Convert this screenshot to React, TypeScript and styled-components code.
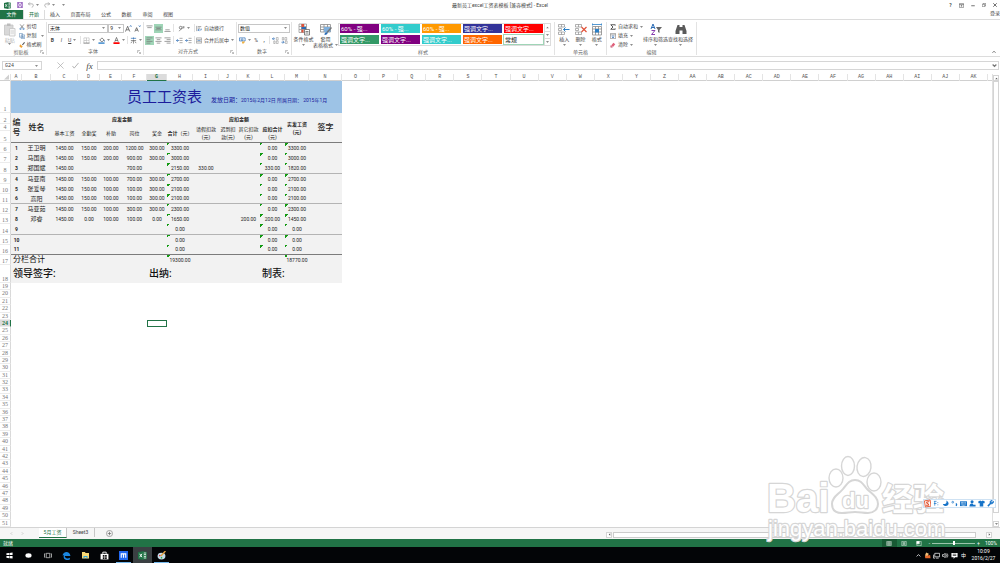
import React from 'react';
import styled, { createGlobalStyle, css } from 'styled-components';

const green = '#217346';
const uiFont = `Roboto, 'Noto Sans CJK SC', sans-serif`;
const columnWidths = [11, 11, 29, 27, 22, 22, 25, 20, 26, 26, 18, 23, 25, 24, 33];
const columnNames = [
  ...'ABCDEFGHIJKLMNOPQRSTUVWXYZ'.split(''),
  ...'ABCDEFGHIJK'.split('').map((c) => 'A' + c),
];
const gridColumns = columnWidths.map((w) => `${w}px`).join(' ') + ' repeat(23, 1fr) 4px';

const GlobalStyle = createGlobalStyle`
  * { box-sizing: border-box; }
  body { margin: 0; background: #fff; font: 5px/1 ${uiFont}; color: #444; }
  button, select, input { font: inherit; color: inherit; margin: 0; padding: 0; border: 0; background: none; border-radius: 0; }
  svg { display: block; flex: none; }
`;

const Page = styled.div`
  position: relative;
  display: flex;
  flex-direction: column;
  min-height: 100vh;
  overflow: hidden;
`;

/* ---------- title bar and tabs ---------- */
const TitleBar = styled.header`
  display: grid;
  grid-template-columns: 1fr auto 1fr;
  align-items: center;
  height: 10px;
`;
const QuickAccess = styled.div`
  display: flex;
  align-items: center;
  gap: 5px;
  padding-left: 4px;
`;
const WindowControls = styled.div`
  display: flex;
  justify-content: flex-end;
  gap: 4px;
  padding-right: 2px;
`;
const IconButton = styled.button`
  display: flex;
  align-items: center;
  gap: 2px;
  min-width: 7px;
  justify-content: center;
`;
const TabBar = styled.nav`
  display: flex;
  align-items: stretch;
  height: 9px;
`;
const FileTab = styled.button`
  width: 23px;
  background: ${green};
  color: #fff;
`;
const RibbonTab = styled.button<{ $w: number; $active?: boolean }>`
  width: ${(p) => p.$w}px;
  ${(p) =>
    p.$active &&
    css`
      color: ${green};
      background: #fff;
      border: 1px solid #dcdcdc;
      border-width: 0 1px;
    `}
`;
const SignIn = styled.a`
  margin-left: auto;
  padding-top: 1px;
  color: #444;
  text-decoration: none;
`;

/* ---------- ribbon ---------- */
const Ribbon = styled.section`
  display: flex;
  height: 38px;
  padding: 2px 0 1px;
  border: 1px solid #dcdcdc;
  border-width: 1px 0;
`;
const GroupBox = styled.div<{ $w: number }>`
  display: flex;
  flex-direction: column;
  width: ${(p) => p.$w}px;
  border-right: 1px solid #e3e3e3;
`;
const GroupBody = styled.div<{ $row?: boolean; $pad?: number }>`
  flex: 1;
  display: flex;
  flex-direction: ${(p) => (p.$row ? 'row' : 'column')};
  gap: ${(p) => (p.$row ? 0 : 2)}px;
  padding: 1px ${(p) => p.$pad ?? 1}px 0;
`;
const GroupLabel = styled.div`
  display: flex;
  align-items: center;
  height: 7px;
  padding: 0 2px;
  color: #666;
  span { flex: 1; text-align: center; }
`;
const ToolRow = styled.div`
  display: flex;
  align-items: center;
  height: 10px;
`;
const Tool = styled.button<{ $w?: number; $on?: boolean }>`
  display: flex;
  align-items: center;
  justify-content: center;
  gap: 2px;
  width: ${(p) => p.$w ?? 9}px;
  height: 9px;
  background: ${(p) => (p.$on ? '#9fd5b7' : 'transparent')};
`;
const TextTool = styled.button`
  display: flex;
  align-items: center;
  gap: 2px;
  height: 7px;
  white-space: nowrap;
`;
const Rule = styled.i`
  width: 1px;
  height: 8px;
  margin: 0 1px;
  background: #e3e3e3;
`;
const BigTool = styled.button<{ $w: number; $dim?: boolean }>`
  display: flex;
  flex-direction: column;
  align-items: center;
  width: ${(p) => p.$w}px;
  height: 26px;
  color: ${(p) => (p.$dim ? '#b5b5b5' : '#444')};
  line-height: 6px;
  white-space: nowrap;
`;
const InlineCaret = styled.span`
  display: flex;
  align-items: center;
  justify-content: center;
  gap: 2px;
  min-height: 6px;
`;
const Combo = styled.label<{ $w: number }>`
  display: flex;
  align-items: center;
  width: ${(p) => p.$w}px;
  height: 9px;
  padding: 0 2px 0 1px;
  border: 1px solid #c6c6c6;
  color: #222;
  select { flex: 1; min-width: 0; height: 7px; appearance: none; }
`;
const SmallStack = styled.div<{ $ml?: number }>`
  display: flex;
  flex-direction: column;
  gap: 2px;
  margin-left: ${(p) => p.$ml ?? 0}px;
`;
const Gallery = styled.div`
  display: flex;
  flex: 1;
  height: 23px;
  margin: 0 2px 0 1px;
  border: 1px solid #dcdcdc;
`;
const Swatches = styled.div`
  flex: 1;
  display: grid;
  grid-template-columns: repeat(5, 39px);
  grid-auto-rows: 9px;
  gap: 2px;
  padding: 0 1px;
`;
const Swatch = styled.button<{ $bg: string; $plain?: boolean }>`
  background: ${(p) => p.$bg};
  color: ${(p) => (p.$plain ? '#222' : '#fff')};
  font-size: 6px;
  line-height: 8px;
  text-align: left;
  padding-left: 1px;
  white-space: nowrap;
  outline: ${(p) => (p.$plain ? '1px solid #9fd5b7' : 'none')};
`;
const GalleryScroll = styled.div`
  display: grid;
  width: 6px;
  border-left: 1px solid #dcdcdc;
  button { display: grid; place-items: center; border-bottom: 1px solid #dcdcdc; }
  button:last-child { border: 0; }
`;
const CollapseRibbon = styled.button`
  align-self: flex-end;
  margin: 0 4px 1px auto;
`;

/* ---------- formula bar ---------- */
const FormulaBar = styled.div`
  display: flex;
  align-items: center;
  height: 17px;
  padding: 0 1px 0 2px;
`;
const NameBox = styled.label`
  display: flex;
  align-items: center;
  width: 40px;
  height: 9px;
  padding: 0 3px 0 2px;
  border: 1px solid #d6d6d6;
  input { flex: 1; min-width: 0; font: 5px 'Liberation Mono', monospace; outline: 0; }
`;
const FormulaButtons = styled.div`
  display: flex;
  align-items: center;
  justify-content: space-between;
  width: 36px;
  margin: 0 4px 0 15px;
`;
const FormulaField = styled.label`
  display: flex;
  align-items: center;
  flex: 1;
  height: 9px;
  padding-right: 1px;
  border: 1px solid #d6d6d6;
  input { flex: 1; outline: 0; }
`;
const FxText = styled.i`
  font: italic 9px 'Liberation Serif', serif;
`;

/* ---------- sheet ---------- */
const SheetArea = styled.main`
  flex: 1;
  display: flex;
  border-bottom: 1px solid #d4d4d4;
`;
const Sheet = styled.div`
  flex: 1;
  display: flex;
  flex-direction: column;
  min-width: 0;
`;
const ColumnHeads = styled.div`
  display: grid;
  grid-template-columns: ${gridColumns};
  height: 7px;
  border-bottom: 1px solid #d0d0d0;
`;
const ColumnHead = styled.div<{ $on?: boolean }>`
  height: 7px;
  border-right: 1px solid #e4e4e4;
  font: 5px/7px 'Liberation Mono', monospace;
  text-align: center;
  color: ${(p) => (p.$on ? green : '#555')};
  ${(p) => p.$on && css`background: #dcdcdc; font-weight: bold; border-bottom: 1px solid ${green};`}
`;
const rowHead = css`
  border-right: 1px solid #d9d9d9;
  border-bottom: 1px solid #ececec;
  background: #fff;
  font: 6px/6px 'Liberation Serif', serif;
  text-align: center;
  color: #777;
`;
const SalaryTable = styled.table`
  width: 342px;
  table-layout: fixed;
  border-collapse: separate;
  border-spacing: 0;
  background: #f2f2f2;
  color: #222;
  td, th { padding: 0; text-align: center; font-weight: normal; white-space: nowrap; }
`;
const Row = styled.tr<{ $h: number; $line?: string }>`
  height: ${(p) => p.$h}px;
  & > td { border-bottom: ${(p) => (p.$line ? `1px solid ${p.$line}` : '0')}; }
`;
const RowNumber = styled.th`
  && { ${rowHead} vertical-align: bottom; }
`;
const TitleCell = styled.td`
  background: #9dc3e6;
  color: #1c1c9c;
`;
const TitleLine = styled.div`
  display: flex;
  align-items: baseline;
  padding-left: 116px;
  strong { font-size: 15px; font-weight: normal; line-height: 18px; margin-right: 9px; }
  span { font-size: 6px; }
`;
const HeadCell = styled.td<{ $big?: boolean; $bold?: boolean; $line?: boolean }>`
  && {
    font-size: ${(p) => (p.$big ? 8 : 5)}px;
    line-height: ${(p) => (p.$big ? 10 : 8)}px;
    font-weight: ${(p) => (p.$bold ? 'bold' : p.$big ? 500 : 'normal')};
    border-bottom: ${(p) => (p.$line ? '1px solid #7c7c7c' : '0')};
    white-space: pre-line;
  }
`;
const Cell = styled.td<{ $flag?: boolean; $size?: number; $bold?: boolean }>`
  && {
    font-size: ${(p) => p.$size ?? 5}px;
    font-weight: ${(p) => (p.$bold ? 'bold' : 'normal')};
  }
  ${(p) =>
    p.$flag &&
    css`background: linear-gradient(135deg, #139a13 50%, transparent 50%) 0 0 / 3px 3px no-repeat;`}
`;
const SumCell = styled.td<{ $size: number; $weight?: number }>`
  && {
    font-size: ${(p) => p.$size}px;
    text-align: left;
    padding-left: 2px;
    color: #111;
    font-weight: ${(p) => p.$weight ?? 400};
    line-height: 1;
  }
`;
const EmptyRows = styled.div`
  flex: 1;
  display: flex;
  flex-direction: column;
`;
const EmptyRow = styled.div`
  flex: 1;
  min-height: 7px;
  display: grid;
  grid-template-columns: ${gridColumns};
`;
const EmptyHead = styled.div<{ $on?: boolean }>`
  ${rowHead}
  ${(p) => p.$on && css`background: #dcdcdc; color: ${green}; font-weight: bold; border-right-color: ${green};`}
`;
const SelectedCell = styled.div`
  grid-column: 8;
  border: 1px solid ${green};
`;
const VScroll = styled.div`
  display: flex;
  flex-direction: column;
  width: 8px;
  padding: 1px 1px 0 0;
  border-left: 1px solid #e0e0e0;
`;
const ScrollButton = styled.button`
  display: grid;
  place-items: center;
  width: 6px;
  height: 6px;
  border: 1px solid #d4d4d4;
  background: #fff;
`;
const VThumb = styled.div`
  flex: 1;
  width: 6px;
  margin-bottom: 8px;
  border: 1px solid #d4d4d4;
`;

/* ---------- sheet tabs, status bar, task bar ---------- */
const SheetTabs = styled.div`
  display: flex;
  align-items: stretch;
  height: 11px;
  background: #f6f6f6;
`;
const TabArrows = styled.div`
  display: flex;
  align-items: center;
  justify-content: space-around;
  width: 39px;
  padding: 0 11px 0 6px;
`;
const SheetTab = styled.button<{ $on?: boolean }>`
  width: 28px;
  height: ${(p) => (p.$on ? 10 : 9)}px;
  color: ${(p) => (p.$on ? green : '#444')};
  background: ${(p) => (p.$on ? '#fff' : 'transparent')};
  border-right: 1px solid #c6c6c6;
  border-bottom: ${(p) => (p.$on ? `1px solid ${green}` : '0')};
`;
const NewSheet = styled(IconButton)`
  margin-left: 11px;
`;
const HScroll = styled.div`
  display: flex;
  align-items: center;
  gap: 1px;
  width: 394px;
  margin-left: auto;
  padding: 2px 8px 0 0;
`;
const HThumb = styled.div`
  width: 363px;
  height: 6px;
  margin-right: auto;
  background: #fff;
  border: 1px solid #cccccc;
`;
const StatusBar = styled.footer`
  display: flex;
  align-items: center;
  height: 8px;
  padding: 0 3px;
  background: ${green};
  color: #fff;
`;
const ViewButtons = styled.div`
  display: flex;
  margin-left: auto;
`;
const ViewButton = styled.button<{ $on?: boolean }>`
  display: grid;
  place-items: center;
  width: 15px;
  height: 8px;
  background: ${(p) => (p.$on ? '#185a34' : 'transparent')};
`;
const Zoom = styled.label`
  display: flex;
  align-items: center;
  gap: 2px;
  margin: 0 5px 0 2px;
  input {
    width: 43px;
    height: 5px;
    appearance: none;
    background: linear-gradient(#9cc4ac, #9cc4ac) center / 100% 1px no-repeat;
  }
  input::-webkit-slider-thumb { appearance: none; width: 2px; height: 4px; background: #fff; }
`;
const TaskBar = styled.footer`
  display: flex;
  align-items: stretch;
  height: 16px;
  background: #030507;
  color: #fff;
`;
const TaskItem = styled.button<{ $on?: boolean; $open?: boolean }>`
  display: grid;
  place-items: center;
  width: 15px;
  margin: 0 2px;
  background: ${(p) => (p.$on ? '#3a3f42' : 'transparent')};
  box-shadow: ${(p) => (p.$on ? '-2px 0 #3a3f42, 2px 0 #3a3f42' : 'none')};
  border-bottom: 1px solid ${(p) => (p.$open ? '#76b9ed' : p.$on ? '#3a3f42' : 'transparent')};
  border-top: 1px solid transparent;
`;
const Tray = styled.div`
  display: flex;
  align-items: center;
  gap: 2px;
  margin-left: auto;
  padding-right: 4px;
`;
const Clock = styled.time`
  width: 25px;
  margin-left: 2px;
  line-height: 7px;
  text-align: center;
`;

/* ---------- overlays ---------- */
const Watermark = styled.svg`
  position: absolute;
  right: 50px;
  bottom: 19px;
  pointer-events: none;
`;
const ImeBar = styled.div`
  position: absolute;
  right: 4px;
  bottom: 55px;
  display: flex;
  align-items: center;
  gap: 2px;
  height: 9px;
  padding-right: 1px;
  background: #fff;
  border: 1px solid #cfe2f3;
  color: #1673c8;
`;

type IconProps = { w?: number; h?: number; box?: string; children: React.ReactNode };
const Icon = ({ w = 7, h = 7, box = '0 0 16 16', children }: IconProps) => (
  <svg width={w} height={h} viewBox={box} fill="none" stroke="currentColor" strokeWidth="1.6" aria-hidden="true">
    {children}
  </svg>
);
const Caret = () => (
  <svg width="3" height="2" viewBox="0 0 6 4" aria-hidden="true"><path d="M0 0h6L3 4z" fill="#8c8c8c" /></svg>
);
const Launcher = () => (
  <svg width="4" height="4" viewBox="0 0 8 8" fill="none" stroke="#888" aria-hidden="true">
    <path d="M1 6V1h5M3 3l4 4M7 4v3H4" />
  </svg>
);
const Lines = ({ rows, color = '#777' }: { rows: [number, number, number][]; color?: string }) => (
  <Icon>{rows.map(([x, y, w]) => <path key={y} d={`M${x} ${y}h${w}`} stroke={color} strokeWidth="1.6" />)}</Icon>
);
const ExcelIcon = ({ size = 7 }: { size?: number }) => (
  <Icon w={size} h={size}>
    <path d="M9 2h6v12H9z" fill="#fff" stroke={green} />
    <path d="M10 5h4M10 8h4M10 11h4" stroke={green} />
    <path d="M0 2l10-2v16L0 14z" fill={green} stroke="none" />
    <path d="M3 5l4 6M7 5l-4 6" stroke="#fff" />
  </Icon>
);
const TableGlyph = () => (
  <g stroke="#888" strokeWidth="1.3" fill="#fff">
    <path d="M1 2h12v5H1zM7 2v5M1 17h12v5H1zM7 17v5M1 10h6v4H1z" />
  </g>
);

const Group = ({ label, w, launcher, children }: { label: string; w: number; launcher?: boolean; children: React.ReactNode }) => (
  <GroupBox $w={w}>
    {children}
    <GroupLabel><span>{label}</span>{launcher && <Launcher />}</GroupLabel>
  </GroupBox>
);

const swatches: [string, string][] = [
  ['60% - 强...', '#800080'], ['60% - 强...', '#33cccc'], ['60% - 强...', '#ff9900'],
  ['强调文字...', '#333399'], ['强调文字...', '#ff0000'], ['强调文字...', '#339966'],
  ['强调文字...', '#800080'], ['强调文字...', '#33cccc'], ['强调文字...', '#ff6600'], ['常规', '#ffffff'],
];

const people: string[][] = [
  ['王卫明', '1450.00', '150.00', '200.00', '1200.00', '300.00', '3300.00', '', '', '', '0.00', '3300.00'],
  ['马国鑫', '1450.00', '150.00', '200.00', '900.00', '300.00', '3000.00', '', '', '', '0.00', '3000.00'],
  ['郑国斌', '1450.00', '', '', '700.00', '', '2150.00', '330.00', '', '', '330.00', '1820.00'],
  ['马亚南', '1450.00', '150.00', '100.00', '700.00', '300.00', '2700.00', '', '', '', '0.00', '2700.00'],
  ['张爱琴', '1450.00', '150.00', '100.00', '100.00', '300.00', '2100.00', '', '', '', '0.00', '2100.00'],
  ['高阳', '1450.00', '150.00', '100.00', '100.00', '300.00', '2100.00', '', '', '', '0.00', '2100.00'],
  ['马亚茹', '1450.00', '150.00', '100.00', '300.00', '300.00', '2300.00', '', '', '', '0.00', '2300.00'],
  ['邓睿', '1450.00', '0.00', '100.00', '100.00', '0.00', '1650.00', '', '', '200.00', '200.00', '1450.00'],
  ['', '', '', '', '', '', '0.00', '', '', '', '0.00', '0.00'],
  ['', '', '', '', '', '', '0.00', '', '', '', '0.00', '0.00'],
  ['', '', '', '', '', '', '0.00', '', '', '', '0.00', '0.00'],
];
const flagged = [6, 10, 11];
const rowLine = (i: number) => (i === 10 ? '#7c7c7c' : i === 2 || i === 5 || i === 8 ? '#b4b4b4' : undefined);

const RibbonBar = () => (
  <Ribbon>
    <Group label="剪贴板" w={47} launcher>
      <GroupBody $row $pad={2}>
        <BigTool $w={16} $dim>
          <Icon w={12} h={14} box="0 0 24 28">
            <path d="M1 4h17v20H1z" fill="#d8d8d8" stroke="#c4c4c4" /><path d="M6 1h7v5H6z" fill="#bbb" stroke="none" />
            <path d="M11 11h11v15H11z" fill="#f6f6f6" stroke="#c4c4c4" /><path d="M13 16h7M13 20h7" stroke="#ccc" />
          </Icon>
          <span>粘贴</span><Caret />
        </BigTool>
        <SmallStack $ml={1}>
          <TextTool>
            <Icon w={6} h={6}><path d="M3 1l8 10M13 1L5 11" stroke="#555" /><circle cx="4" cy="13" r="2" stroke="#2b6cb5" /><circle cx="12" cy="13" r="2" stroke="#2b6cb5" /></Icon>剪切
          </TextTool>
          <TextTool>
            <Icon w={6} h={6}><path d="M1 1h8v10H1zM6 5h9v10H6z" fill="#fff" stroke="#5b87b5" /><path d="M8 9h5M8 12h5" stroke="#5b87b5" /></Icon>复制 &nbsp;<Caret />
          </TextTool>
          <TextTool>
            <Icon w={6} h={6}><path d="M15 1L9 8" stroke="#555" strokeWidth="3" /><path d="M3 6l7 6-4 4-5-5z" fill="#f0a030" stroke="none" /></Icon>格式刷
          </TextTool>
        </SmallStack>
      </GroupBody>
    </Group>

    <Group label="字体" w={97} launcher>
      <GroupBody>
        <ToolRow>
          <Combo $w={61}><select aria-label="字体"><option>宋体</option></select><Caret /></Combo>
          <Combo $w={16}><select aria-label="字号"><option>9</option></select><Caret /></Combo>
          <Tool aria-label="增大字号"><Icon><path d="M1 15L6 3l5 12M3 11h6" /><path d="M11 4l2-3 2 3" stroke="#2b6cb5" /></Icon></Tool>
          <Tool aria-label="减小字号"><Icon><path d="M2 15L6 6l4 9M4 12h4" /><path d="M11 1l2 3 2-3" stroke="#2b6cb5" /></Icon></Tool>
        </ToolRow>
        <ToolRow>
          <Tool><b>B</b></Tool>
          <Tool><i>I</i></Tool>
          <Tool $w={13}><u>U</u><Caret /></Tool>
          <Rule />
          <Tool $w={15} aria-label="边框"><Icon><path d="M2 2h12v12H2zM8 2v12M2 8h12" stroke="#aaa" strokeDasharray="2 1" /><path d="M1 14h14" stroke="#777" /></Icon><Caret /></Tool>
          <Tool $w={15} aria-label="填充颜色"><Icon><path d="M4 7l5-5 5 5-5 4z" stroke="#555" /><path d="M14 7l2 4" stroke="#2b6cb5" /><path d="M1 14h14" stroke="#5b9bd5" strokeWidth="4" /></Icon><Caret /></Tool>
          <Tool $w={15} aria-label="字体颜色"><Icon><path d="M4 11L8 1l4 10M5 8h6" stroke="#555" /><path d="M1 14h14" stroke="#f00" strokeWidth="4" /></Icon><Caret /></Tool>
          <Rule />
          <Tool $w={13} aria-label="拼音"><Icon><path d="M2 3h12M8 1v4" stroke="#2b6cb5" /><path d="M2 8h12M8 6v9M5 10l-3 4M11 10l3 4" stroke="#666" /></Icon><Caret /></Tool>
        </ToolRow>
      </GroupBody>
    </Group>

    <Group label="对齐方式" w={93} launcher>
      <GroupBody>
        <ToolRow>
          <Tool aria-label="顶端对齐"><Lines rows={[[1, 2, 14], [3, 6, 10]]} /></Tool>
          <Tool $on aria-label="垂直居中"><Lines rows={[[1, 5, 14], [3, 8, 10], [1, 11, 14]]} /></Tool>
          <Tool aria-label="底端对齐"><Lines rows={[[3, 11, 10], [1, 15, 14]]} /></Tool>
          <Rule />
          <Tool $w={18} aria-label="方向"><Icon><path d="M2 14L14 4M14 4l-4 0M14 4l-1 4" stroke="#777" /><circle cx="6" cy="6" r="3" stroke="#555" /></Icon><Caret /></Tool>
          <Rule />
          <TextTool><Icon w={6}><path d="M2 1v14M5 3h9M5 7h6" stroke="#666" /><path d="M5 12h9V8M8 10l-3 2 3 3" stroke="#2b6cb5" /></Icon>自动换行</TextTool>
        </ToolRow>
        <ToolRow>
          <Tool $on aria-label="左对齐"><Lines rows={[[1, 2, 14], [1, 6, 9], [1, 10, 14], [1, 14, 9]]} /></Tool>
          <Tool aria-label="居中"><Lines rows={[[1, 2, 14], [4, 6, 8], [1, 10, 14], [4, 14, 8]]} /></Tool>
          <Tool aria-label="右对齐"><Lines rows={[[1, 2, 14], [6, 6, 9], [1, 10, 14], [6, 14, 9]]} /></Tool>
          <Rule />
          <Tool aria-label="减少缩进"><Icon><path d="M8 3h7M8 8h7M8 13h7" stroke="#888" /><path d="M7 8H1M4 5L1 8l3 3" stroke="#2b6cb5" /></Icon></Tool>
          <Tool aria-label="增加缩进"><Icon><path d="M8 3h7M8 8h7M8 13h7" stroke="#888" /><path d="M0 8h6M3 5l3 3-3 3" stroke="#2b6cb5" /></Icon></Tool>
          <Rule />
          <TextTool><Icon w={6}><path d="M1 1h14v14H1zM1 5h14M1 11h14" stroke="#888" /><path d="M4 8h8" stroke="#2b6cb5" /></Icon>合并后居中<Caret /></TextTool>
        </ToolRow>
      </GroupBody>
    </Group>

    <Group label="数字" w={55} launcher>
      <GroupBody>
        <ToolRow><Combo $w={52}><select aria-label="数字格式"><option>数值</option></select><Caret /></Combo></ToolRow>
        <ToolRow>
          <Tool $w={14} aria-label="会计数字格式"><Icon><path d="M1 2h13v7H1z" stroke="#2b6cb5" /><circle cx="7" cy="6" r="2" stroke="#2b6cb5" /><path d="M7 10h7l-3 5H7z" fill="#f0b040" stroke="none" /></Icon><Caret /></Tool>
          <Tool $w={8}>%</Tool>
          <Tool $w={8}><b>,</b></Tool>
          <Rule />
          <Tool aria-label="增加小数位数"><Icon><path d="M1 4h6M4 1L1 4l3 3" stroke="#2b6cb5" /><path d="M10 1h4v6h-4zM4 9h3v6H4zM10 9h4v6h-4z" stroke="#777" strokeWidth="1" /></Icon></Tool>
          <Tool aria-label="减少小数位数"><Icon><path d="M9 1h4v6H9zM3 1h3v6H3zM10 9h4v6h-4z" stroke="#777" strokeWidth="1" /><path d="M1 12h6M4 9l3 3-3 3" stroke="#2b6cb5" /></Icon></Tool>
        </ToolRow>
      </GroupBody>
    </Group>

    <Group label="样式" w={263}>
      <GroupBody $row>
        <BigTool $w={21}>
          <Icon w={12} h={13} box="0 0 24 24">
            <path d="M2 1h15v17H2zM7 1v17M12 1v17M2 6h15M2 12h15" stroke="#999" /><path d="M7 1h5v6H7zM7 12h4v6H7z" fill="#e0523a" stroke="none" />
            <path d="M7 7h9v4H7z" fill="#2b6cb5" stroke="none" /><path d="M13 12h10v11H13zM15 16h6M15 19h6" fill="#fff" stroke="#666" />
          </Icon>
          <span>条件格式</span><InlineCaret><Caret /></InlineCaret>
        </BigTool>
        <BigTool $w={23}>
          <Icon w={12} h={13} box="0 0 24 24">
            <path d="M1 2h20v15H1zM1 7h20M1 12h20M8 2v15M15 2v15" stroke="#888" /><path d="M8 7h13v10H8z" fill="#7fb0dd" stroke="none" />
            <path d="M23 8l-9 10" stroke="#777" strokeWidth="3" /><path d="M9 23c0-5 3-6 6-5 1 3-2 5-6 5z" fill="#2b6cb5" stroke="none" />
          </Icon>
          <span>套用</span><InlineCaret>表格格式<Caret /></InlineCaret>
        </BigTool>
        <Gallery>
          <Swatches>
            {swatches.map(([t, c], i) => <Swatch key={i} $bg={c} $plain={i === 9}>{t}</Swatch>)}
          </Swatches>
          <GalleryScroll>
            <button aria-label="上一行"><Icon w={3} h={3}><path d="M1 12l7-8 7 8z" fill="#777" stroke="none" /></Icon></button>
            <button aria-label="下一行"><Caret /></button>
            <button aria-label="其他样式"><Caret /></button>
          </GalleryScroll>
        </Gallery>
      </GroupBody>
    </Group>

    <Group label="单元格" w={52}>
      <GroupBody $row>
        <BigTool $w={17}>
          <Icon w={12} h={13} box="0 0 24 24"><TableGlyph /><path d="M23 12H11M15 8l-4 4 4 4" stroke="#2b7fc5" strokeWidth="2" /></Icon>
          <span>插入</span><InlineCaret><Caret /></InlineCaret>
        </BigTool>
        <BigTool $w={16}>
          <Icon w={12} h={13} box="0 0 24 24"><TableGlyph /><path d="M13 7l10 10M23 7L13 17" stroke="#e0523a" strokeWidth="2.4" /></Icon>
          <span>删除</span><InlineCaret><Caret /></InlineCaret>
        </BigTool>
        <BigTool $w={17}>
          <Icon w={12} h={13} box="0 0 24 24"><path d="M3 6h18v17H3zM3 11h18M3 17h18M9 6v17M15 6v17" stroke="#888" /><path d="M8 11h8v7H8z" fill="#2b7fc5" stroke="none" /><path d="M3 2h18M3 0v4M21 0v4" stroke="#2b7fc5" /></Icon>
          <span>格式</span><InlineCaret><Caret /></InlineCaret>
        </BigTool>
      </GroupBody>
    </Group>

    <Group label="编辑" w={90}>
      <GroupBody $row $pad={3}>
        <SmallStack>
          <TextTool><Icon w={6} h={6}><path d="M14 4V2H2l6 6-6 6h12v-2" stroke="#444" strokeWidth="2.4" /></Icon>自动求和 <Caret /></TextTool>
          <TextTool><Icon w={6} h={6}><path d="M1 1h14v14H1zM1 5h14" stroke="#777" /><path d="M8 6v7M5 10l3 3 3-3" stroke="#2b6cb5" strokeWidth="2" /></Icon>填充<Caret /></TextTool>
          <TextTool><Icon w={6} h={6}><path d="M9 2l5 4-6 7-5-4z" fill="#e0607a" stroke="none" /><path d="M2 10l4 4H2z" stroke="#c04060" /></Icon>清除<Caret /></TextTool>
        </SmallStack>
        <BigTool $w={25}>
          <Icon w={12} h={13} box="0 0 24 24"><path d="M2 11L6 1l4 10M3 8h6" stroke="#2b6cb5" strokeWidth="2" /><path d="M3 14h7l-7 8h7" stroke="#8a3fb0" strokeWidth="2" /><path d="M12 7h12l-5 6v6l-3-2v-4z" fill="#666" stroke="none" /></Icon>
          <span>排序和筛选</span><InlineCaret><Caret /></InlineCaret>
        </BigTool>
        <BigTool $w={26}>
          <Icon w={12} h={13} box="0 0 24 24"><path d="M5 3h4v4h6V3h4l4 12v6h-8v-7h-6v7H1v-6z" fill="#5a5a5a" stroke="none" /></Icon>
          <span>查找和选择</span><InlineCaret><Caret /></InlineCaret>
        </BigTool>
      </GroupBody>
    </Group>
    <CollapseRibbon aria-label="折叠功能区"><Icon w={4} h={4}><path d="M2 11l6-6 6 6" strokeWidth="3" /></Icon></CollapseRibbon>
  </Ribbon>
);

const Salary = () => (
  <SalaryTable>
    <colgroup>{columnWidths.map((w, i) => <col key={i} style={{ width: w }} />)}</colgroup>
    <tbody>
      <Row $h={32}>
        <RowNumber>1</RowNumber>
        <TitleCell colSpan={14}>
          <TitleLine><strong>员工工资表</strong><span>发放日期：</span>2015年2月12日 所属日期： 2015年1月</TitleLine>
        </TitleCell>
      </Row>
      <Row $h={11}>
        <RowNumber>2</RowNumber>
        <HeadCell rowSpan={3} $big $line>{'编\n号'}</HeadCell>
        <HeadCell rowSpan={3} $big $line>姓名</HeadCell>
        <HeadCell colSpan={6} $bold>应发金额</HeadCell>
        <HeadCell colSpan={4} $bold>应扣金额</HeadCell>
        <HeadCell rowSpan={3} $bold $line>{'实发工资\n(元)'}</HeadCell>
        <HeadCell rowSpan={3} $big $line>签字</HeadCell>
      </Row>
      <Row $h={7}>
        <RowNumber>4</RowNumber>
        {['基本工资', '全勤奖', '补助', '岗位', '奖金'].map((t) => <HeadCell key={t} rowSpan={2} $line>{t}</HeadCell>)}
        <HeadCell rowSpan={2} $line><b>合计</b>（元）</HeadCell>
        <HeadCell rowSpan={2} $line>{'请假扣款\n(元)'}</HeadCell>
        <HeadCell rowSpan={2} $line>{'迟到扣\n款(元)'}</HeadCell>
        <HeadCell rowSpan={2} $line>{'其它扣款\n(元)'}</HeadCell>
        <HeadCell rowSpan={2} $line><b>应扣合计</b>{'\n(元)'}</HeadCell>
      </Row>
      <Row $h={12}><RowNumber>5</RowNumber></Row>
      {people.map((p, i) => (
        <Row key={i} $h={i === 2 || i === 8 ? 11 : 10} $line={rowLine(i)}>
          <RowNumber>{i + 6}</RowNumber>
          <Cell $bold>{i + 1}</Cell>
          {p.map((v, c) => <Cell key={c} $size={c === 0 ? 6 : 5} $flag={flagged.includes(c)}>{v}</Cell>)}
          <Cell />
        </Row>
      ))}
      <Row $h={10}>
        <RowNumber>17</RowNumber>
        <SumCell $size={8} colSpan={7}>分栏合计</SumCell>
        <Cell $flag>19300.00</Cell>
        <Cell colSpan={4} />
        <Cell $flag>18770.00</Cell>
        <Cell />
      </Row>
      <Row $h={18}>
        <RowNumber>18</RowNumber>
        <SumCell $size={10} $weight={500} colSpan={6}>领导签字:</SumCell>
        <SumCell $size={10} $weight={500} colSpan={5}>出纳:</SumCell>
        <SumCell $size={10} $weight={500} colSpan={3}>制表:</SumCell>
      </Row>
    </tbody>
  </SalaryTable>
);

const Paw = () => (
  <Watermark width="184" height="92" viewBox="766 452 184 92" fill="#fff" stroke="#d6d6d6" strokeWidth="1.4" strokeLinejoin="round" aria-hidden="true">
    <g fontFamily="'Liberation Sans', sans-serif" fontWeight="bold">
      <text x="767" y="512" fontSize="40" strokeWidth="2.4" paintOrder="stroke">Bai</text>
      <ellipse cx="836" cy="478" rx="7" ry="9" />
      <ellipse cx="848" cy="466" rx="6.5" ry="9.5" />
      <ellipse cx="864" cy="467" rx="7" ry="9.5" transform="rotate(8 864 467)" />
      <ellipse cx="874" cy="482" rx="7" ry="9" />
      <path d="M855 480c-6 0-8 4-12 9-5 6-11 8-11 15 0 6 4 9 10 9 5 0 8-1 13-1s8 1 13 1c6 0 10-4 10-9 0-7-6-10-11-15-4-5-6-9-12-9z" strokeWidth="2" />
      <text x="842" y="508" fontSize="22" strokeWidth="2.4" paintOrder="stroke">du</text>
    </g>
    <text x="882" y="510" fontSize="31" fontFamily="'Noto Sans CJK SC', sans-serif" fontWeight="bold" strokeWidth="2.4" paintOrder="stroke">经验</text>
    <text x="768" y="536" fontSize="22" fontFamily="'Liberation Sans', sans-serif" strokeWidth="2.4" paintOrder="stroke">jingyan.baidu.com</text>
  </Watermark>
);

export default function App() {
  return (
    <Page>
      <GlobalStyle />
      <TitleBar>
        <QuickAccess>
          <ExcelIcon />
          <IconButton aria-label="保存"><Icon w={6} h={6}><path d="M1 1h14v14H1zM4 1v5h8V1M4 15V10h8v5" stroke="#8a4fb5" strokeWidth="2" /></Icon></IconButton>
          <IconButton aria-label="撤消"><Icon w={6} h={6}><path d="M5 1L1 5l4 4M1 5h9c6 0 5 8 0 9" stroke="#999" strokeWidth="2" /></Icon><Caret /></IconButton>
          <IconButton aria-label="恢复"><Icon w={6} h={6}><path d="M11 1l4 4-4 4M15 5H6c-6 0-5 8 0 9" stroke="#999" strokeWidth="2" /></Icon><Caret /></IconButton>
          <IconButton aria-label="自定义快速访问工具栏"><Caret /></IconButton>
        </QuickAccess>
        <span>最新员工excel工资表模板 [兼容模式] - Excel</span>
        <WindowControls>
          <IconButton><b>?</b></IconButton>
          <IconButton aria-label="功能区显示选项"><Icon w={5} h={5}><path d="M1 2h14v12H1zM1 5h14M8 12V7M6 9l2-2 2 2" /></Icon></IconButton>
          <IconButton aria-label="最小化"><Icon w={4} h={4}><path d="M1 11h14" strokeWidth="3" /></Icon></IconButton>
          <IconButton aria-label="还原"><Icon w={4} h={4}><path d="M1 5h10v10H1zM5 5V1h10v10h-4" strokeWidth="2" /></Icon></IconButton>
          <IconButton aria-label="关闭"><Icon w={4} h={4}><path d="M1 1l14 14M15 1L1 15" strokeWidth="3" /></Icon></IconButton>
        </WindowControls>
      </TitleBar>
      <TabBar>
        <FileTab>文件</FileTab>
        <RibbonTab $w={22} $active>开始</RibbonTab>
        <RibbonTab $w={20}>插入</RibbonTab>
        <RibbonTab $w={31}>页面布局</RibbonTab>
        <RibbonTab $w={20}>公式</RibbonTab>
        <RibbonTab $w={21}>数据</RibbonTab>
        <RibbonTab $w={21}>审阅</RibbonTab>
        <RibbonTab $w={20}>视图</RibbonTab>
        <SignIn href="#signin">登录</SignIn>
      </TabBar>
      <RibbonBar />

      <FormulaBar>
        <NameBox><input aria-label="名称框" defaultValue="G24" /><Caret /></NameBox>
        <FormulaButtons>
          <IconButton aria-label="取消"><Icon><path d="M1 1l14 14M15 1L1 15" stroke="#aaa" /></Icon></IconButton>
          <IconButton aria-label="输入"><Icon><path d="M1 9l4 5L15 2" stroke="#aaa" strokeWidth="2" /></Icon></IconButton>
          <IconButton aria-label="插入函数"><FxText>fx</FxText></IconButton>
        </FormulaButtons>
        <FormulaField>
          <input aria-label="编辑栏" />
          <Icon w={5} h={5}><path d="M2 5l6 6 6-6" strokeWidth="4" stroke="#777" /></Icon>
        </FormulaField>
      </FormulaBar>

      <SheetArea>
        <Sheet>
          <ColumnHeads>
            <ColumnHead><Icon w={10} h={6} box="0 0 20 12"><path d="M18 1v10H8z" fill="#d0d0d0" stroke="none" /></Icon></ColumnHead>
            {columnNames.map((n) => <ColumnHead key={n} $on={n === 'G'}>{n}</ColumnHead>)}
          </ColumnHeads>
          <Salary />
          <EmptyRows>
            {Array.from({ length: 33 }, (_, i) => i + 19).map((n) => (
              <EmptyRow key={n}>
                <EmptyHead $on={n === 24}>{n}</EmptyHead>
                {n === 24 && <SelectedCell />}
              </EmptyRow>
            ))}
          </EmptyRows>
        </Sheet>
        <VScroll>
          <ScrollButton aria-label="向上滚动"><Icon w={3} h={3}><path d="M1 12l7-8 7 8z" fill="#555" stroke="none" /></Icon></ScrollButton>
          <VThumb />
          <ScrollButton aria-label="向下滚动"><Caret /></ScrollButton>
        </VScroll>
      </SheetArea>

      <SheetTabs>
        <TabArrows>
          <Icon w={3} h={3}><path d="M11 2L5 8l6 6" stroke="#aaa" strokeWidth="3" /></Icon>
          <Icon w={3} h={3}><path d="M5 2l6 6-6 6" stroke="#aaa" strokeWidth="3" /></Icon>
        </TabArrows>
        <SheetTab $on>5月工资</SheetTab>
        <SheetTab>Sheet3</SheetTab>
        <NewSheet aria-label="新工作表"><Icon><circle cx="8" cy="8" r="7" stroke="#888" /><path d="M8 4v8M4 8h8" stroke="#666" /></Icon></NewSheet>
        <HScroll>
          <ScrollButton aria-label="向左滚动"><Icon w={3} h={3}><path d="M12 1L4 8l8 7z" fill="#555" stroke="none" /></Icon></ScrollButton>
          <HThumb />
          <ScrollButton aria-label="向右滚动"><Icon w={3} h={3}><path d="M4 1l8 7-8 7z" fill="#555" stroke="none" /></Icon></ScrollButton>
        </HScroll>
      </SheetTabs>

      <StatusBar>
        <span>就绪</span>
        <ViewButtons>
          <ViewButton $on aria-label="普通"><Icon w={6} h={5}><path d="M1 1h14v14H1zM1 6h14M1 10h14M8 1v14" /></Icon></ViewButton>
          <ViewButton aria-label="页面布局"><Icon w={6} h={5}><path d="M1 1h14v14H1zM4 5h8M4 8h8M4 11h8" /></Icon></ViewButton>
          <ViewButton aria-label="分页预览"><Icon w={6} h={5}><path d="M1 1h14v14H1z" /><path d="M1 1h8v8H1z" fill="#fff" /></Icon></ViewButton>
        </ViewButtons>
        <Zoom>-<input type="range" aria-label="显示比例" defaultValue={50} />+</Zoom>
        <span>100%</span>
      </StatusBar>

      <TaskBar>
        <TaskItem aria-label="开始菜单"><Icon><path d="M1 3l6-1v5H1zM8 2l7-1v6H8zM1 9h6v5l-6-1zM8 9h7v6l-7-1z" fill="#fff" stroke="none" /></Icon></TaskItem>
        <TaskItem aria-label="搜索"><Icon><ellipse cx="8" cy="8" rx="7" ry="5" fill="#fff" stroke="none" /></Icon></TaskItem>
        <TaskItem aria-label="任务视图"><Icon w={8} h={7}><path d="M4 3h8v10H4zM2 4H0v8h2M14 4h2v8h-2" stroke="#ddd" /></Icon></TaskItem>
        <TaskItem aria-label="Edge"><Icon w={9} h={9}><path d="M1 8C2 0 14-1 15 9H5c0 5 6 5 9 3v3C8 18 2 15 3 9c1-3 3-4 5-4 2 0 3 1 3 2H6" fill="#1a86e0" stroke="none" /></Icon></TaskItem>
        <TaskItem aria-label="文件资源管理器"><Icon w={9} h={8}><path d="M1 2h6l1 2h7v11H1z" fill="#f5d774" stroke="none" /><path d="M4 15v-5h8v5h-2v-3H6v3z" fill="#2fa5e0" stroke="none" /></Icon></TaskItem>
        <TaskItem aria-label="应用商店"><Icon w={9} h={9}><path d="M1 5h14v10H1z" fill="#fff" stroke="none" /><path d="M5 5V2h6v3" stroke="#fff" /><path d="M5 7h3v3H5zM9 7h3v3H9zM5 11h3v3H5zM9 11h3v3H9z" fill="#111" stroke="none" /></Icon></TaskItem>
        <TaskItem $open aria-label="傲游浏览器"><Icon w={9} h={9}><path d="M0 0h16v16H0z" fill="#2268f0" stroke="none" /><path d="M4 12V5h8v7M8 5v7" stroke="#fff" strokeWidth="2" /></Icon></TaskItem>
        <TaskItem $on aria-label="Excel"><ExcelIcon size={9} /></TaskItem>
        <TaskItem $open aria-label="画图"><Icon w={9} h={9}><ellipse cx="8" cy="9" rx="7" ry="6" fill="#c3dcea" stroke="none" /><circle cx="5" cy="8" r="1.5" fill="#d33" stroke="none" /><circle cx="8" cy="12" r="1.5" fill="#2a4" stroke="none" /><path d="M15 0L7 9" stroke="#e0a040" strokeWidth="2.5" /></Icon></TaskItem>
        <Tray>
          <IconButton aria-label="显示隐藏的图标"><Icon w={5} h={5}><path d="M2 11l6-6 6 6" strokeWidth="2.4" /></Icon></IconButton>
          <Icon><path d="M5 1l6 3-3 6-6-2z" fill="#f3c27a" stroke="none" /><path d="M2 9l12-2 1 7H3z" fill="#e56a2c" stroke="none" /></Icon>
          <Icon><path d="M4 3h11v8H4zM7 14h6M1 6v8h4" /></Icon>
          <Icon><path d="M1 6h3l3-3v10L4 10H1zM9 5c2 2 2 4 0 6M11 3c3 3 3 7 0 10" /></Icon>
          <Icon><path d="M1 2h14v10H9l-3 4v-4H1z" fill="#fff" stroke="none" /><path d="M4 5h8M4 8h8" stroke="#222" /></Icon>
          <IconButton>中</IconButton>
          <Clock>10:09<br />2016/2/27</Clock>
        </Tray>
      </TaskBar>

      <Paw />
      <ImeBar>
        <Icon w={7} h={9}><path d="M1 2l13-2 2 14-13 2z" fill="#fff" stroke="#e2502c" strokeWidth="2" /><path d="M12 4C6 3 4 6 8 8s4 5-4 4" stroke="#e2502c" strokeWidth="2.4" /></Icon>
        <Icon><path d="M2 3h6M2 8h6M4 3v10M11 5v2M11 10v2" strokeWidth="1.6" /></Icon>
        <Icon><path d="M10 1c2 7-3 9-8 8 2 7 14 6 13-2-1-3-3-5-5-6z" fill="currentColor" stroke="none" /></Icon>
        <Icon><circle cx="4" cy="5" r="2" /><path d="M11 8c3 1 2 4 0 5" strokeWidth="3" /></Icon>
        <Icon><path d="M0 3h16v11H0z" fill="currentColor" stroke="none" /><path d="M2 6h12M2 9h12M4 12h8" stroke="#fff" strokeDasharray="2 1" /></Icon>
        <Icon><circle cx="7" cy="4" r="3.5" fill="currentColor" stroke="none" /><path d="M1 15c0-9 8-8 9-4h5v4z" fill="currentColor" stroke="none" /></Icon>
        <Icon><path d="M5 1l3 2 3-2 5 3-2 4-2-1v8H4V7L2 8 0 4z" fill="currentColor" stroke="none" /></Icon>
        <Icon><path d="M2 14l7-7" strokeWidth="3.5" /><path d="M14 3l-3 3-2-2 3-3C7 0 6 5 8 8c3 2 8 0 7-5z" fill="currentColor" /></Icon>
      </ImeBar>
    </Page>
  );
}
